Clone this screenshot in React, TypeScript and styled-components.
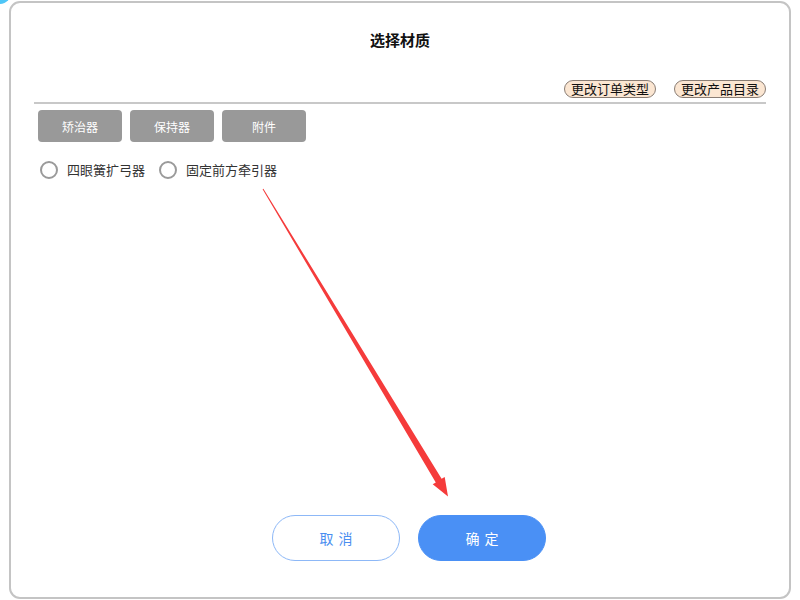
import React, { FC, useState } from "react";
import styled, { createGlobalStyle } from "styled-components";

const GlobalStyle = createGlobalStyle`
  html, body {
    margin: 0;
    padding: 0;
    background: #ffffff;
    font-family: "Noto Sans CJK SC", "Noto Sans", sans-serif;
  }
  * {
    box-sizing: border-box;
  }
`;

const Page = styled.div`
  position: relative;
  width: 800px;
  height: 600px;
  overflow: hidden;
  padding: 1px 0 0 9px;
`;

const Blob = styled.div`
  position: absolute;
  left: -14px;
  top: -22px;
  width: 26px;
  height: 26px;
  border-radius: 50%;
  background: #4fc6f7;
`;

const Dialog = styled.div`
  position: relative;
  width: 782px;
  height: 598px;
  border: 2px solid #c4c4c4;
  border-radius: 11px;
  background: #ffffff;
  display: flex;
  flex-direction: column;
  padding: 0 23px 36px;
`;

const Title = styled.h1`
  margin: 27px 0 0;
  text-align: center;
  font-size: 15px;
  line-height: 20px;
  font-weight: 700;
  color: #111;
`;

const TagRow = styled.div`
  display: flex;
  justify-content: flex-end;
  gap: 18px;
  margin-top: 30px;
`;

const Tag = styled.button`
  height: 18px;
  padding: 0 6px;
  border: 1px solid #8a7d74;
  border-radius: 9px;
  background: #fbe6d2;
  color: #111;
  font-family: inherit;
  font-size: 13px;
  line-height: 16px;
`;

const Divider = styled.hr`
  margin: 4px 0 0;
  border: none;
  height: 2px;
  background: #c8c8c8;
`;

const Tabs = styled.div`
  display: flex;
  gap: 8px;
  margin: 6px 0 0 4px;
`;

const TabButton = styled.button<{ $active?: boolean }>`
  width: 84px;
  height: 32px;
  border: none;
  border-radius: 4px;
  background: ${(p) => (p.$active ? "#8a8a8a" : "#999999")};
  color: #ffffff;
  font-family: inherit;
  font-size: 12px;
`;

const Options = styled.div`
  display: flex;
  align-items: center;
  gap: 14px;
  margin: 18px 0 0 6px;
`;

const Option = styled.label`
  display: flex;
  align-items: center;
  gap: 9px;
  font-size: 13px;
  color: #333;
  cursor: pointer;
`;

const RadioCircle = styled.span<{ $checked?: boolean }>`
  width: 18px;
  height: 18px;
  border-radius: 50%;
  border: 2px solid ${(p) => (p.$checked ? "#4a90f5" : "#9a9a9a")};
  background: ${(p) => (p.$checked ? "radial-gradient(#4a90f5 35%, #fff 40%)" : "#fff")};
`;

const Footer = styled.div`
  margin-top: auto;
  display: flex;
  justify-content: center;
  gap: 18px;
  padding-left: 18px;
`;

const ActionButton = styled.button<{ $primary?: boolean }>`
  width: 128px;
  height: 46px;
  border-radius: 23px;
  border: 1px solid ${(p) => (p.$primary ? "#4a90f5" : "#8db8f7")};
  background: ${(p) => (p.$primary ? "#4a90f5" : "#ffffff")};
  color: ${(p) => (p.$primary ? "#ffffff" : "#4a8ef0")};
  font-family: inherit;
  font-size: 14px;
  letter-spacing: 5px;
  text-indent: 5px;
`;

const ArrowLayer = styled.svg`
  position: absolute;
  left: 0;
  top: 0;
  pointer-events: none;
`;

const tabs = ["矫治器", "保持器", "附件"];
const options = ["四眼簧扩弓器", "固定前方牵引器"];

const App: FC = () => {
  const [tab, setTab] = useState(0);
  const [picked, setPicked] = useState(-1);

  return (
    <Page>
      <GlobalStyle />
      <Blob />
      <Dialog>
        <Title>选择材质</Title>
        <TagRow>
          <Tag>更改订单类型</Tag>
          <Tag>更改产品目录</Tag>
        </TagRow>
        <Divider />
        <Tabs>
          {tabs.map((t, i) => (
            <TabButton key={t} onClick={() => setTab(i)}>
              {t}
            </TabButton>
          ))}
        </Tabs>
        <Options>
          {options.map((o, i) => (
            <Option key={o} onClick={() => setPicked(i)}>
              <RadioCircle $checked={picked === i} />
              {o}
            </Option>
          ))}
        </Options>
        <Footer>
          <ActionButton>取消</ActionButton>
          <ActionButton $primary>确定</ActionButton>
        </Footer>
      </Dialog>
      <ArrowLayer width="800" height="600" viewBox="0 0 800 600">
        <polygon
          points="263.4,188.7 262.6,189.3 435.8,482.4 432.7,484.2 448,496.5 444.7,477 441.6,478.8"
          fill="#f53b3b"
        />
      </ArrowLayer>
    </Page>
  );
};

export default App;
